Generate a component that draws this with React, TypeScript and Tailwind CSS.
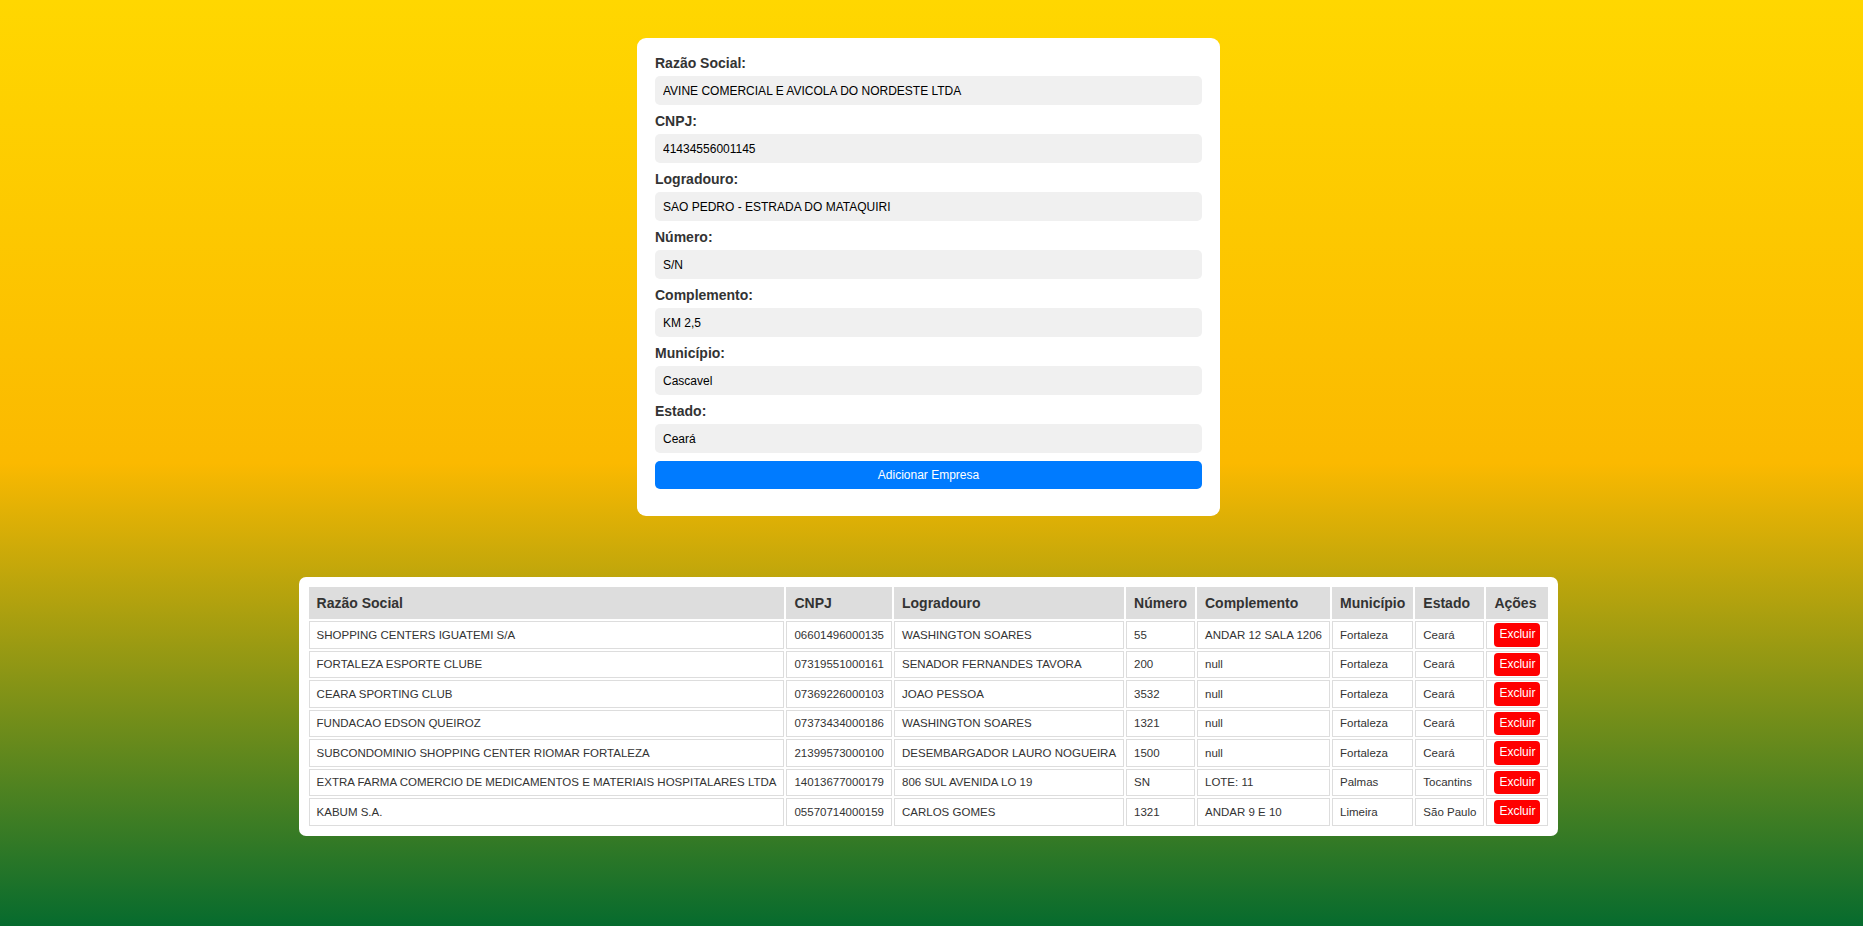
import React from "react";

const fields = [
  { label: "Razão Social:", value: "AVINE COMERCIAL E AVICOLA DO NORDESTE LTDA" },
  { label: "CNPJ:", value: "41434556001145" },
  { label: "Logradouro:", value: "SAO PEDRO - ESTRADA DO MATAQUIRI" },
  { label: "Número:", value: "S/N" },
  { label: "Complemento:", value: "KM 2,5" },
  { label: "Município:", value: "Cascavel" },
  { label: "Estado:", value: "Ceará" },
];

const headers = ["Razão Social", "CNPJ", "Logradouro", "Número", "Complemento", "Município", "Estado", "Ações"];

const empresas = [
  ["SHOPPING CENTERS IGUATEMI S/A", "06601496000135", "WASHINGTON SOARES", "55", "ANDAR 12 SALA 1206", "Fortaleza", "Ceará"],
  ["FORTALEZA ESPORTE CLUBE", "07319551000161", "SENADOR FERNANDES TAVORA", "200", "null", "Fortaleza", "Ceará"],
  ["CEARA SPORTING CLUB", "07369226000103", "JOAO PESSOA", "3532", "null", "Fortaleza", "Ceará"],
  ["FUNDACAO EDSON QUEIROZ", "07373434000186", "WASHINGTON SOARES", "1321", "null", "Fortaleza", "Ceará"],
  ["SUBCONDOMINIO SHOPPING CENTER RIOMAR FORTALEZA", "21399573000100", "DESEMBARGADOR LAURO NOGUEIRA", "1500", "null", "Fortaleza", "Ceará"],
  ["EXTRA FARMA COMERCIO DE MEDICAMENTOS E MATERIAIS HOSPITALARES LTDA", "14013677000179", "806 SUL AVENIDA LO 19", "SN", "LOTE: 11", "Palmas", "Tocantins"],
  ["KABUM S.A.", "05570714000159", "CARLOS GOMES", "1321", "ANDAR 9 E 10", "Limeira", "São Paulo"],
];

export default function App() {
  return (
    <div className="min-h-screen bg-[linear-gradient(to_bottom,#ffd700,#fbb900,#066b2e)] font-['Liberation_Sans',Arial,sans-serif] pt-[38px] pb-[40px] pr-[6px] flex flex-col items-center">
      {/* Formulário */}
      <form className="w-[583px] bg-white rounded-[9px] px-[18px] pt-[17px] pb-[27px]">
        {fields.map((f) => (
          <div key={f.label} className="mb-[8px]">
            <label className="block text-[14px] leading-[16px] font-bold text-[#333] mb-[5px]">{f.label}</label>
            <input
              type="text"
              defaultValue={f.value}
              className="block w-full h-[29px] px-[8px] bg-[#f0f0f0] rounded-[5px] text-[12px] text-black outline-none"
            />
          </div>
        ))}
        <button
          type="button"
          className="w-full h-[28px] bg-[#007bff] text-white text-[12px] rounded-[5px]"
        >
          Adicionar Empresa
        </button>
      </form>

      {/* Tabela */}
      <div className="mt-[61px] bg-white rounded-[7px] p-[8px]">
        <table className="border-separate border-spacing-[2px] text-left">
          <thead>
            <tr>
              {headers.map((h) => (
                <th
                  key={h}
                  className="bg-[#dddddd] border border-[#dddddd] px-[7px] py-[7px] text-[14px] leading-[16px] font-bold text-[#333] whitespace-nowrap"
                >
                  {h}
                </th>
              ))}
            </tr>
          </thead>
          <tbody>
            {empresas.map((row) => (
              <tr key={row[1]}>
                {row.map((cell, i) => (
                  <td
                    key={i}
                    className="border border-[#dddddd] px-[7px] py-[1px] text-[11.5px] leading-[14px] text-[#333] whitespace-nowrap align-middle"
                  >
                    {cell}
                  </td>
                ))}
                <td className="border border-[#dddddd] px-[7px] py-[1px] leading-none align-middle">
                  <button
                    type="button"
                    className="block bg-[#ff0000] text-white text-[12px] leading-[13.5px] px-[5px] py-[5px] rounded-[4px]"
                  >
                    Excluir
                  </button>
                </td>
              </tr>
            ))}
          </tbody>
        </table>
      </div>
    </div>
  );
}
